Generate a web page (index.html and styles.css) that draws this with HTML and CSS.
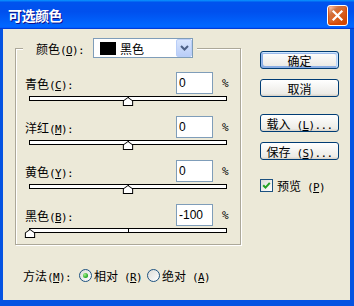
FILE: index.html
```html
<!DOCTYPE html>
<html lang="zh-CN">

<head>
  <meta charset="UTF-8">
  <meta name="viewport" content="width=device-width, initial-scale=1.0">
  <title>可选颜色</title>

  <link rel="stylesheet" href="styles.css">
</head>

<body>
  <div class="window">
    <div class="title-bar">
      <span class="title">可选颜色</span>
      <button class="btn-x" aria-label="关闭">
        <svg width="13" height="13" viewBox="0 0 13 13">
          <path d="M2.5 2.5 L10.5 10.5 M10.5 2.5 L2.5 10.5" stroke="#fff" stroke-width="2.2" stroke-linecap="square" />
        </svg>
      </button>
    </div>

    <div class="dialog">
      <div class="left">
        <fieldset class="group">
          <legend class="pick">
            <div class="pick-inner">
              <span class="pick-label">颜色<span class="hk">(<u>O</u>):</span></span>
              <span class="combo">
                <span class="swatch"></span>
                <span class="combo-text">黑色</span>
                <span class="combo-btn">
                  <svg width="9" height="6" viewBox="0 0 9 6">
                    <path d="M1 1 L4.5 4.5 L8 1" fill="none" stroke="#4d6185" stroke-width="2" />
                  </svg>
                </span>
              </span>
            </div>
          </legend>

          <!-- 数值范围 -100 ~ 100，滑块位置按 (v+100)/200 计算 -->
          <div class="slider-row">
            <label>青色<span class="hk">(<u>C</u>):</span></label>
            <input class="num" type="text" value="0">
            <span class="pct hk">%</span>
          </div>
          <div class="track"><span class="thumb" style="left: 50%"></span></div>

          <div class="slider-row">
            <label>洋红<span class="hk">(<u>M</u>):</span></label>
            <input class="num" type="text" value="0">
            <span class="pct hk">%</span>
          </div>
          <div class="track"><span class="thumb" style="left: 50%"></span></div>

          <div class="slider-row">
            <label>黄色<span class="hk">(<u>Y</u>):</span></label>
            <input class="num" type="text" value="0">
            <span class="pct hk">%</span>
          </div>
          <div class="track"><span class="thumb" style="left: 50%"></span></div>

          <div class="slider-row">
            <label>黑色<span class="hk">(<u>B</u>):</span></label>
            <input class="num" type="text" value="-100">
            <span class="pct hk">%</span>
          </div>
          <div class="track"><span class="thumb" style="left: 0%"></span></div>
        </fieldset>

        <div class="method">
          <span class="method-label">方法<span class="hk">(<u>M</u>):</span></span>
          <span class="opt"><span class="radio checked"></span><span>相对<span class="hk"> (<u>R</u>)</span></span></span>
          <span class="opt"><span class="radio"></span><span>绝对<span class="hk"> (<u>A</u>)</span></span></span>
        </div>
      </div>

      <div class="right">
        <button class="btn default">确定</button>
        <button class="btn">取消</button>
        <button class="btn gap">载入<span class="hk"> (<u>L</u>)...</span></button>
        <button class="btn">保存<span class="hk"> (<u>S</u>)...</span></button>

        <div class="check">
          <span class="box">
            <svg width="9" height="9" viewBox="0 0 9 9">
              <path d="M1.2 4.2 L3.5 6.6 L7.8 1.8" fill="none" stroke="#21a121" stroke-width="2" />
            </svg>
          </span>
          <span>预览<span class="hk"> (<u>P</u>)</span></span>
        </div>
      </div>
    </div>
  </div>
</body>

</html>
```

FILE: styles.css
```css
* {
  box-sizing: border-box;
}

html,
body {
  margin: 0;
}

body {
  width: 354px;
  height: 306px;
  font: 12px "Noto Sans CJK SC", "Liberation Sans", sans-serif;
  color: #000;
}

.window {
  height: 306px;
  display: flex;
  flex-direction: column;
}

.title-bar {
  height: 29px;
  flex: none;
  display: flex;
  align-items: center;
  justify-content: space-between;
  padding: 0 6px 0 8px;
  background: linear-gradient(180deg, #0997ff, #0053ee 8%, #0050ee 40%, #06f 88%, #06f 93%, #005bff 95%, #003dd7 96%, #003dd7);
}

.title {
  color: #fff;
  font-size: 14px;
  font-weight: bold;
  letter-spacing: -0.5px;
  text-shadow: 1px 1px #0f1089;
}

.btn-x {
  width: 21px;
  height: 21px;
  margin-top: 1px;
  padding: 0;
  display: flex;
  align-items: center;
  justify-content: center;
  border: 1px solid #fff;
  border-radius: 3px;
  background: radial-gradient(circle at 90% 90%, #cc4600 0, #dc6527 55%, #cd7546 70%, #ffccb2 90%, #fff);
  box-shadow: inset 0 -1px 2px 1px #da4600;
}

.dialog {
  flex: 1;
  display: flex;
  padding-left: 12px;
  background: #ece9d8;
  border: solid #0553e2;
  border-width: 0 4px 6px 3px;
}

.hk {
  font: 11px "DejaVu Sans Mono", monospace;
  letter-spacing: -0.6px;
  white-space: pre;
}

/* 左侧 */

.left {
  width: 226px;
  padding-top: 9px;
}

.group {
  margin: 0;
  min-width: 0;
  padding: 14px 12px 11px 9px;
  border: 1px solid #aca899;
  box-shadow: 1px 1px 0 #fff, inset 1px 1px 0 #fff;
}

.pick {
  margin-left: -2px;
  padding: 0 4px 0 13px;
  background: #ece9d8;
}

.pick-inner {
  display: flex;
  align-items: center;
  height: 20px;
}

.pick-label {
  width: 57px;
}

.combo {
  width: 100px;
  height: 20px;
  display: flex;
  align-items: center;
  padding-left: 6px;
  background: #fff;
  border: 1px solid #7f9db9;
}

.swatch {
  width: 16px;
  height: 13px;
  background: #000;
}

.combo-text {
  margin-left: 4px;
}

.combo-btn {
  width: 16px;
  height: 18px;
  margin-left: auto;
  display: flex;
  align-items: center;
  justify-content: center;
  border: 1px solid #b9cef8;
  border-radius: 2px;
  background: linear-gradient(180deg, #d9e5fd, #b9cdf8);
}

.slider-row {
  display: grid;
  grid-template-columns: 1fr 37px 15px;
  align-items: center;
  height: 22px;
}

.num {
  width: 37px;
  height: 22px;
  padding: 0 2px;
  border: 1px solid #7f9db9;
  background: #fff;
  font: 12px "Liberation Sans", sans-serif;
  color: #000;
}

.pct {
  text-align: right;
}

.track {
  position: relative;
  height: 5px;
  margin: 2px 1px 15px 4px;
  background: #fff;
  border: 1px solid #000;
}

.track:last-child {
  margin-bottom: 0;
}

.track::after {
  content: "";
  position: absolute;
  left: 50%;
  top: 0;
  bottom: 0;
  width: 1px;
  background: #000;
}

.thumb {
  position: absolute;
  top: 0;
  z-index: 1;
  width: 11px;
  height: 9px;
  transform: translateX(-50%);
  background: #000;
  clip-path: polygon(50% 0, 100% 45%, 100% 100%, 0 100%, 0 45%);
}

.thumb::after {
  content: "";
  position: absolute;
  inset: 1px;
  background: #fff;
  clip-path: polygon(50% 0, 100% 45%, 100% 100%, 0 100%, 0 45%);
}

.method {
  display: flex;
  align-items: center;
  height: 20px;
  margin-top: 20px;
  padding-left: 8px;
}

.method-label {
  width: 56px;
}

.opt {
  display: inline-flex;
  align-items: center;
  gap: 2px;
  width: 68px;
}

.radio {
  position: relative;
  width: 13px;
  height: 13px;
  flex: none;
  border: 1px solid #1c5180;
  border-radius: 50%;
  background: linear-gradient(135deg, #dcdcd7, #fff);
}

.radio.checked::after {
  content: "";
  position: absolute;
  left: 3px;
  top: 3px;
  width: 5px;
  height: 5px;
  border-radius: 50%;
  background: radial-gradient(circle at 35% 35%, #a6f08e, #1fa51f 70%);
}

/* 右侧按钮 */

.right {
  width: 79px;
  margin-left: 19px;
  padding-top: 22px;
  display: flex;
  flex-direction: column;
}

.btn {
  height: 18px;
  margin-bottom: 10px;
  padding: 0;
  font: 12px "Noto Sans CJK SC", sans-serif;
  color: #000;
  border: 1px solid #003c74;
  border-radius: 3px;
  background: linear-gradient(180deg, #fff, #ecebe6 86%, #d6d0c5);
}

.btn.default {
  box-shadow: inset -1px 1px #cee7ff, inset 1px 2px #98b8ea, inset -2px 2px #bcd4f6, inset 1px -1px #89ade4, inset 2px -2px #89ade4;
}

.btn.gap {
  margin-top: 7px;
}

.check {
  display: flex;
  align-items: center;
  gap: 4px;
  margin-top: 7px;
}

.box {
  width: 13px;
  height: 13px;
  display: flex;
  align-items: center;
  justify-content: center;
  border: 1px solid #1c5180;
  background: linear-gradient(135deg, #dcdcd7, #fff);
}
```
